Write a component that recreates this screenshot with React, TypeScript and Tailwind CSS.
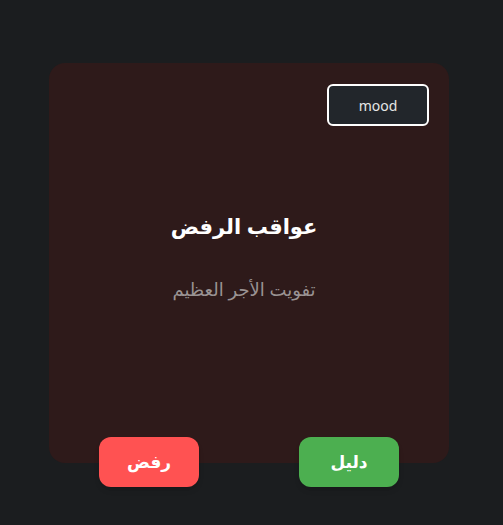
const App = () => {
  return (
    <div
      dir="rtl"
      className="min-h-screen w-full bg-[#1b1d1f] flex items-center justify-center pr-[5px]"
      style={{ fontFamily: '"Noto Sans", "DejaVu Sans", sans-serif' }}
    >
      <div className="relative w-[400px] h-[400px] rounded-2xl bg-[#2e1a1a] flex flex-col items-center justify-center">
        <button
          dir="ltr"
          className="absolute top-[21px] right-5 w-[102px] h-[42px] rounded-md border-2 border-white bg-[#22262b] text-[14px] text-[#e6e6e6] pt-[2px]"
        >
          mood
        </button>

        <div className="flex flex-col items-center gap-[34px] mr-[10px] mt-[-12px]">
          <h2 className="text-[21px] leading-[30px] font-bold text-white">عواقب الرفض</h2>
          <p className="text-[18px] leading-[28px] text-[#9a9393]">تفويت الأجر العظيم</p>
        </div>

        <div className="absolute left-0 right-0 bottom-[-24px] flex justify-around">
          <button className="w-[100px] h-[50px] rounded-xl bg-[#4caf50] text-white font-bold text-[17px] shadow-md">
            دليل
          </button>
          <button className="w-[100px] h-[50px] rounded-xl bg-[#ff5252] text-white font-bold text-[17px] shadow-md">
            رفض
          </button>
        </div>
      </div>
    </div>
  )
}

export default App
